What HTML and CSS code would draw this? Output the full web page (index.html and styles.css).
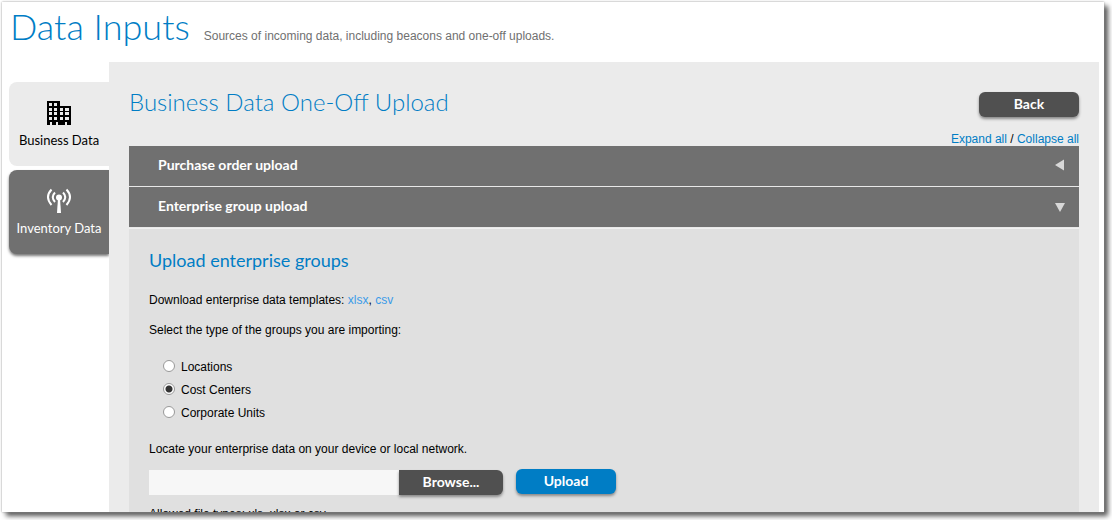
FILE: index.html
```html
<!DOCTYPE html>
<html lang="en">
<head>
<meta charset="utf-8">
<title>Data Inputs</title>
<link rel="stylesheet" href="styles.css">
</head>
<body>
<div class="window">
  <header class="page-header">
    <h1 class="page-title">Data Inputs</h1>
    <p class="page-note">Sources of incoming data, including beacons and one-off uploads.</p>
  </header>
  <div class="layout">
    <nav class="tabs">
      <a class="tab tab-active" href="#business">
        <svg class="tab-icon" viewBox="0 0 26 26" aria-hidden="true">
          <path fill="#000" fill-rule="evenodd" d="M1 1h13v5h11v19h-4v-3h-2v3h-7v-3h-2v3H6v-3H4v3H1zM3 3v3h3V3zM8 3v3h3V3zM3 8v3h3V8zM8 8v3h3V8zM3 12v3h3v-3zM8 12v3h3v-3zM3 17v3h3v-3zM8 17v3h3v-3zM14 8v3h3V8zM19 8v3h4V8zM14 12v3h3v-3zM19 12v3h4v-3zM14 17v3h3v-3zM19 17v3h4v-3z"/>
        </svg>
        <span>Business Data</span>
      </a>
      <a class="tab tab-dark" href="#inventory">
        <svg class="tab-icon" viewBox="0 0 26 26" aria-hidden="true">
          <g fill="none" stroke="#fff" stroke-width="2">
            <path d="M5.500 1.500Q-1.500 9 5.500 17M20.500 1.500Q27.500 9 20.500 17M9 4.500Q4.500 9 9 14M17 4.500Q21.500 9 17 14"/>
          </g>
          <circle cx="13" cy="9.500" r="3" fill="#fff"/>
          <path fill="#fff" d="M12 10h2l1 15h-4z"/>
        </svg>
        <span>Inventory Data</span>
      </a>
    </nav>
    <main class="content">
      <div class="content-head">
        <h2 class="content-title">Business Data One-Off Upload</h2>
        <button class="btn btn-back" type="button">Back</button>
      </div>
      <div class="toggles"><a href="#expand">Expand all</a> / <a href="#collapse">Collapse all</a></div>
      <button class="bar" type="button" aria-expanded="false">
        <span>Purchase order upload</span>
        <svg class="arrow" viewBox="0 0 10 12" aria-hidden="true"><path d="M0 6l9-5.500v11z"/></svg>
      </button>
      <button class="bar" type="button" aria-expanded="true">
        <span>Enterprise group upload</span>
        <svg class="arrow" viewBox="0 0 10 12" aria-hidden="true"><path d="M0 3h10l-5 9z"/></svg>
      </button>
      <section class="panel">
        <h3 class="panel-title">Upload enterprise groups</h3>
        <p class="text">Download enterprise data templates: <a class="file-link" href="#xlsx">xlsx</a>, <a class="file-link" href="#csv">csv</a></p>
        <p class="text">Select the type of the groups you are importing:</p>
        <div class="choices">
          <label class="choice"><input class="radio" type="radio" name="group">Locations</label>
          <label class="choice"><input class="radio" type="radio" name="group" checked>Cost Centers</label>
          <label class="choice"><input class="radio" type="radio" name="group">Corporate Units</label>
        </div>
        <label class="text" for="file-path">Locate your enterprise data on your device or local network.</label>
        <div class="upload-row">
          <input class="file-path" id="file-path" type="text">
          <button class="btn btn-browse" type="button">Browse...</button>
          <button class="btn btn-upload" type="button">Upload</button>
        </div>
        <p class="text">Allowed file types: xls, xlsx or csv.</p>
      </section>
    </main>
  </div>
</div>
</body>
</html>
```
FILE: styles.css
```css
* { box-sizing: border-box; }
body {
  margin: 0;
  padding: 2px 8px 8px 2px;
  height: 100vh;
  overflow: hidden;
  background: #fff;
  font: 12px/20px "Liberation Sans", Arial, sans-serif;
  color: #000;
}
h1, h2, h3, p { margin: 0; }
a { color: #007dc5; text-decoration: none; }
button { border: 0; cursor: pointer; }
.window {
  height: 100%;
  overflow: hidden;
  background: #fff;
  box-shadow: 0 0 2px #999, 4px 4px 5px #555;
}
.page-header {
  display: flex;
  align-items: baseline;
  gap: 14px;
  height: 60px;
  padding: 2px 8px 0;
}
.page-title {
  font: 300 36px/44px Lato, sans-serif;
  color: #007dc5;
}
.page-note { color: #707070; }
.layout { display: flex; padding: 0 5px 0 7px; }
.tabs {
  display: flex;
  flex-direction: column;
  gap: 4px;
  width: 100px;
  flex: none;
  padding-top: 20px;
}
.tab {
  display: flex;
  flex-direction: column;
  align-items: center;
  gap: 4px;
  height: 84px;
  padding-top: 18px;
  border-radius: 8px 0 0 8px;
  font: 13px/20px Lato, sans-serif;
  white-space: nowrap;
}
.tab-active { background: #ebebeb; color: #000; }
.tab-dark { background: #707070; color: #fff; box-shadow: 0 2px 3px #777; }
.tab-icon { width: 26px; height: 26px; flex: none; }
.content {
  flex: 1;
  min-width: 0;
  padding: 24px 20px 0;
  background: #ebebeb;
}
.content-head {
  display: flex;
  justify-content: space-between;
  height: 43px;
}
.content-title {
  font: 300 24px/32px Lato, sans-serif;
  color: #007dc5;
}
.btn {
  height: 25px;
  border-radius: 6px;
  background: #505050;
  color: #fff;
  font: bold 14px/24px Lato, sans-serif;
  box-shadow: 0 2px 3px #888;
  padding: 0 0 1px;
}
.btn-back { width: 100px; margin-top: 6px; }
.toggles { height: 17px; text-align: right; }
.bar {
  display: flex;
  align-items: center;
  justify-content: space-between;
  width: 100%;
  height: 41px;
  padding: 0 14px 2px 29px;
  border-bottom: 1px solid #e8e8e8;
  background: #707070;
  color: #fff;
  font: bold 14px/20px Lato, sans-serif;
}
.arrow { width: 10px; height: 12px; fill: #d8d8d8; }
.panel { padding: 19px 20px 30px; background: #e0e0e0; border-top: 1px solid #f0f0f0; }
.panel-title {
  margin-bottom: 18px;
  font: 18px/24px Lato, sans-serif;
  color: #007dc5;
}
.text { display: block; margin-bottom: 10px; }
.file-link { color: #3a9be8; }
.choices { padding: 5px 14px 15px; }
.choice { display: flex; align-items: center; gap: 6px; height: 23px; }
.radio {
  appearance: none;
  width: 12px;
  height: 12px;
  margin: 0 0 1px;
  border: 1px solid #999;
  border-radius: 50%;
  background: #fff;
}
.radio:checked { background: radial-gradient(circle, #333 3px, #fff 4px); }
.upload-row { display: flex; align-items: flex-start; margin-bottom: 9px; }
.file-path {
  width: 250px;
  height: 25px;
  margin-top: 1px;
  border: 0;
  background: #f7f7f7;
}
.btn-browse { width: 104px; margin: 1px 13px 0 0; border-radius: 0 6px 6px 0; }
.btn-upload { width: 100px; background: #007dc5; }
```
